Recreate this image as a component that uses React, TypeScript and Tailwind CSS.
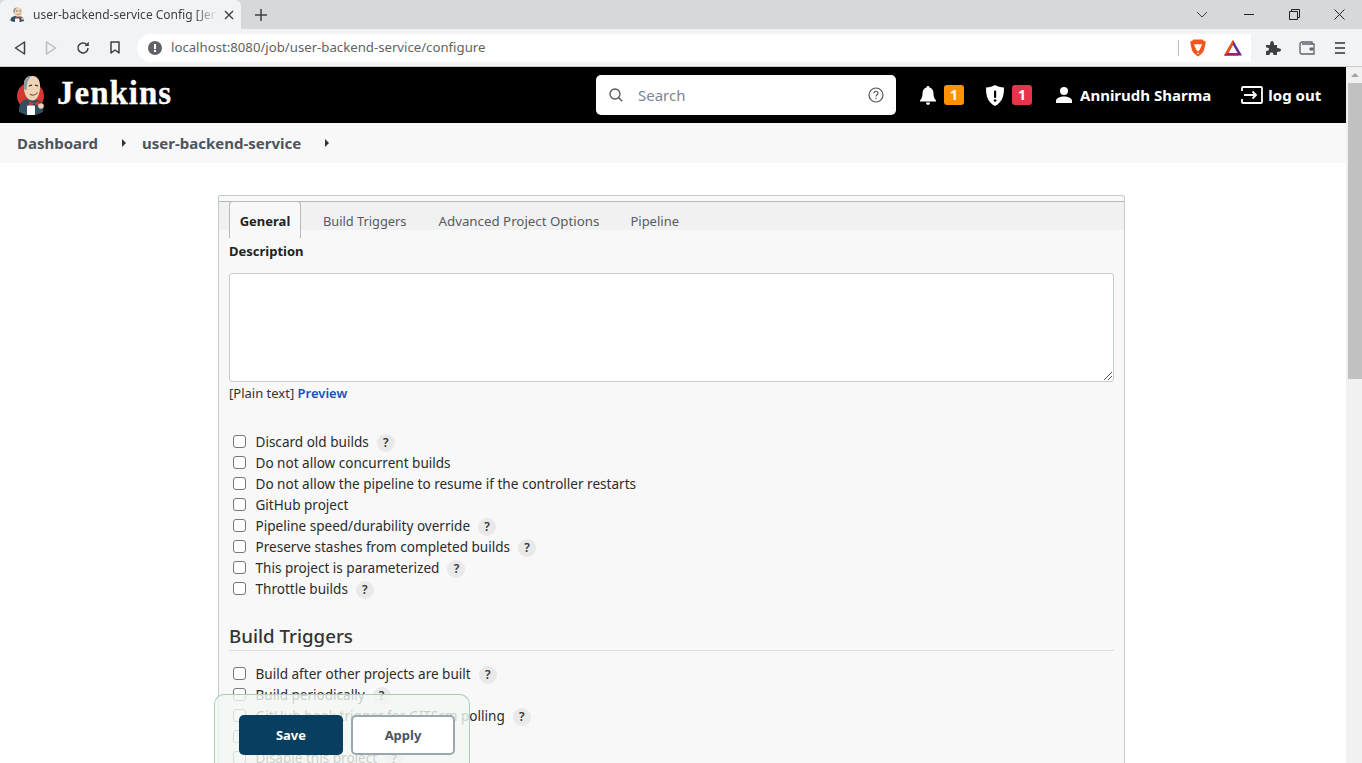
import React from "react";

const generalOptions = [
  { label: "Discard old builds", help: true },
  { label: "Do not allow concurrent builds" },
  { label: "Do not allow the pipeline to resume if the controller restarts" },
  { label: "GitHub project" },
  { label: "Pipeline speed/durability override", help: true },
  { label: "Preserve stashes from completed builds", help: true },
  { label: "This project is parameterized", help: true },
  { label: "Throttle builds", help: true },
];

const triggerOptions = [
  { label: "Build after other projects are built", help: true },
  { label: "Build periodically", help: true },
  { label: "GitHub hook trigger for GITScm polling", help: true },
  { label: "Poll SCM", help: true },
  { label: "Disable this project", help: true },
];

function JenkinsFigure() {
  return (
    <>
      <path d="M3 37 C2 30 6 25 11 24 L21 25 C26 26 28 30 27 37 L20 40 H10 Z" fill="#335061" />
      <path d="M8 9 C8 3 12 0.5 17 1 C22 1.5 24.5 6 24 13 C23.5 20 21 25 17 25.5 C13 26 9 22 8 15 Z" fill="#eed3b5" />
      <path d="M8 10 C8 4 11 1 16 1 C13 2.5 11.5 6 11 10 L10.5 15 L8.2 14.5 Z" fill="#8c9aa3" />
      <path d="M13 11 l3 -1 M19 10 l3 1" stroke="#231f20" strokeWidth="1.2" fill="none" />
      <path d="M14 19 C16 21 20 20 21.5 17.5" stroke="#8a5a44" strokeWidth="1.1" fill="none" />
      <path d="M13 26 L18 28.5 L23 26 L23 31 L18 29 L13 31 Z" fill="#d33833" />
      <rect x="11" y="30.5" width="8" height="9.5" rx="1" fill="#ffffff" />
      <circle cx="25" cy="31" r="2.8" fill="#eed3b5" />
    </>
  );
}

function JenkinsLogo() {
  return (
    <svg width="30" height="40" viewBox="0 0 30 40">
      <circle cx="14.5" cy="21" r="13.5" fill="#d33833" />
      <JenkinsFigure />
    </svg>
  );
}

function Favicon() {
  return (
    <svg width="15" height="15" viewBox="2 0 27 40" preserveAspectRatio="none">
      <JenkinsFigure />
    </svg>
  );
}

function BraveIcon() {
  return (
    <svg width="16" height="18" viewBox="0 0 16 18">
      <path d="M3.5 0.5 H12.5 L14 2 L15.5 2 L15.5 5 L14 11 C13.5 13.5 10 16 8 17.5 C6 16 2.5 13.5 2 11 L0.5 5 L0.5 2 L2 2 Z" fill="#f1561f" />
      <path d="M4 5 L6.5 5.5 L8 5 L9.5 5.5 L12 5 L11 8 L9.5 11 L8 12.5 L6.5 11 L5 8 Z" fill="#ffffff" />
      <path d="M6.5 14 H9.5 L8 15.2 Z" fill="#ffffff" />
    </svg>
  );
}

function BatIcon() {
  return (
    <svg width="18" height="16" viewBox="0 0 18 16">
      <path d="M9 0 L18 15.5 H0 Z" fill="#662d91" />
      <path d="M9 0 L0 15.5 L4 13.2 L9 4.5 Z" fill="#ff5000" />
      <path d="M9 5 L4.5 13 H13.5 Z" fill="#ffffff" />
      <path d="M0 15.5 L4 13 H13 L14.5 15.5 Z" fill="#9e1f63" />
    </svg>
  );
}

function BrowserChrome() {
  return (
    <div className="shrink-0">
      <div className="flex h-[29px] items-end bg-[#d6d9dc]">
        <div className="flex h-[29px] w-[241px] items-center rounded-t-[6px] bg-[#f2f3f5] pl-[10px]">
          <Favicon />
          <span className="ml-2 w-[184px] overflow-hidden whitespace-nowrap text-xs text-[#3c4043] [mask-image:linear-gradient(to_right,black_88%,transparent)]">
            user-backend-service Config [Jenkins]
          </span>
          <svg width="10" height="10" viewBox="0 0 10 10" className="ml-[7px]">
            <path d="M1 1 L9 9 M9 1 L1 9" stroke="#3c4043" strokeWidth="1.4" />
          </svg>
        </div>
        <svg width="14" height="14" viewBox="0 0 14 14" className="mb-[7px] ml-[13px]">
          <path d="M7 1 V13 M1 7 H13" stroke="#3c4043" strokeWidth="1.5" />
        </svg>
        <div className="ml-auto flex h-[29px] items-center">
          <svg width="12" height="7" viewBox="0 0 12 7" className="mr-[36px]">
            <path d="M1 1 L6 6 L11 1" stroke="#3c4043" fill="none" />
          </svg>
          <div className="mr-[35px] h-px w-[10px] bg-[#222]" />
          <svg width="11" height="11" viewBox="0 0 11 11" className="mr-[34px]">
            <path d="M0.5 2.5 H8.5 V10.5 H0.5 Z M2.5 2.5 V0.5 H10.5 V8.5 H8.5" stroke="#222" fill="none" />
          </svg>
          <svg width="11" height="11" viewBox="0 0 11 11" className="mr-[17px]">
            <path d="M0.5 0.5 L10.5 10.5 M10.5 0.5 L0.5 10.5" stroke="#222" />
          </svg>
        </div>
      </div>
      <div className="flex h-[38px] items-center border-b border-[#c8cacc] bg-[#f2f3f5]">
        <svg width="12" height="14" viewBox="0 0 12 14" className="ml-[14px]">
          <path d="M10.5 1 V13 L1.5 7 Z" stroke="#3c4043" strokeWidth="1.5" fill="none" strokeLinejoin="round" />
        </svg>
        <svg width="12" height="14" viewBox="0 0 12 14" className="ml-[19px]">
          <path d="M1.5 1 V13 L10.5 7 Z" stroke="#b9bcc0" strokeWidth="1.5" fill="none" strokeLinejoin="round" />
        </svg>
        <svg width="14" height="14" viewBox="0 0 14 14" className="ml-[19px]">
          <path d="M12 7 A5 5 0 1 1 10.5 3.4" stroke="#3c4043" strokeWidth="1.5" fill="none" />
          <path d="M12.8 0.8 V5 H8.6 Z" fill="#3c4043" />
        </svg>
        <svg width="10" height="13" viewBox="0 0 10 13" className="ml-[20px]">
          <path d="M1 1 H9 V12 L5 9 L1 12 Z" stroke="#3c4043" strokeWidth="1.5" fill="none" strokeLinejoin="round" />
        </svg>
        <div className="ml-[17px] flex h-7 w-[1114px] items-center rounded-l-full rounded-r-[6px] bg-white pl-[11px]">
          <svg width="14" height="14" viewBox="0 0 14 14">
            <circle cx="7" cy="7" r="7" fill="#5f6368" />
            <rect x="6" y="3" width="2" height="5" fill="#fff" />
            <rect x="6" y="9" width="2" height="2" fill="#fff" />
          </svg>
          <span className="ml-[9px] pt-px text-[13.2px] text-[#5f6368]">
            localhost:8080/job/user-backend-service/configure
          </span>
          <div className="ml-auto h-4 w-px bg-[#b9bcc0]" />
          <div className="ml-[11px] flex w-[16px] justify-center">
            <BraveIcon />
          </div>
          <div className="ml-[18px] mr-[9px] flex">
            <BatIcon />
          </div>
        </div>
        <svg width="16" height="16" viewBox="0 0 16 16" className="ml-[14px]">
          <path d="M1 5 H5 C5 2 6 1 7 1 C8 1 9 2 9 5 H12 V8 C15 8 16 9 16 10 C16 11 15 12 12 12 V15 H8.5 C8.5 13 7.5 12.5 6.5 12.5 C5.5 12.5 4.5 13 4.5 15 H1 V11 C3 11 4 10 4 9 C4 8 3 7.5 1 7.5 Z" fill="#3c4043" />
        </svg>
        <svg width="16" height="14" viewBox="0 0 16 14" className="ml-[18px]">
          <path d="M13 3 V1 H3 C2 1 1 2 1 3 V11 C1 12 2 13 3 13 H15 V3 H3" stroke="#5f6368" strokeWidth="1.3" fill="none" />
          <rect x="10.5" y="6.5" width="4" height="3" rx="1" fill="#5f6368" />
        </svg>
        <div className="ml-[20px] flex w-[10px] flex-col gap-[3px]">
          <div className="h-[2px] bg-[#5f6368]" />
          <div className="h-[2px] bg-[#5f6368]" />
          <div className="h-[2px] bg-[#5f6368]" />
        </div>
      </div>
    </div>
  );
}

function JenkinsHeader() {
  return (
    <header className="flex h-14 shrink-0 items-center bg-black text-white">
      <div className="ml-4 flex">
        <JenkinsLogo />
      </div>
      <span className="mb-[4px] ml-[11px] w-[116px] whitespace-nowrap font-['Liberation_Serif',serif] text-[33px] font-bold leading-none tracking-[1px] [-webkit-text-stroke:0.3px_white]">
        Jenkins
      </span>
      <div className="ml-[423px] flex h-10 w-[300px] items-center rounded-[5px] bg-white pl-[13px] pr-[12px]">
        <svg width="14" height="14" viewBox="0 0 14 14">
          <circle cx="6" cy="6" r="5" stroke="#555" strokeWidth="1.3" fill="none" />
          <path d="M9.7 9.7 L13.3 13.3" stroke="#555" strokeWidth="1.3" />
        </svg>
        <span className="ml-[15px] text-[15px] text-[#7a8594]">Search</span>
        <svg width="16" height="16" viewBox="0 0 16 16" className="ml-auto">
          <circle cx="8" cy="8" r="7" stroke="#555" strokeWidth="1.2" fill="none" />
          <path d="M6 6.2 C6 3.6 10 3.6 10 6.2 C10 7.8 8 7.6 8 9.5" stroke="#555" strokeWidth="1.2" fill="none" />
          <rect x="7.4" y="10.8" width="1.2" height="1.4" fill="#555" />
        </svg>
      </div>
      <svg width="16" height="19" viewBox="0 0 16 19" className="ml-6">
        <path d="M8 0 C9 0 9.5 0.7 9.5 1.6 C12 2.3 13.5 4.5 13.5 7.5 C13.5 11 14.2 12.5 16 14.5 V15.5 H0 V14.5 C1.8 12.5 2.5 11 2.5 7.5 C2.5 4.5 4 2.3 6.5 1.6 C6.5 0.7 7 0 8 0 Z" fill="#fff" />
        <path d="M6 16.5 H10 C10 18 9 19 8 19 C7 19 6 18 6 16.5 Z" fill="#fff" />
      </svg>
      <span className="ml-2 flex h-5 w-5 items-center justify-center rounded-[3px] bg-[#fe9200] text-sm font-bold">
        1
      </span>
      <svg width="18" height="21" viewBox="0 0 18 21" className="ml-[22px]">
        <path d="M9 0 C11.5 1.5 14.5 2.5 18 2.5 C18 11 16.5 17 9 21 C1.5 17 0 11 0 2.5 C3.5 2.5 6.5 1.5 9 0 Z" fill="#fff" />
        <rect x="8" y="5.5" width="2.2" height="7.5" rx="1" fill="#000" />
        <circle cx="9.1" cy="15.5" r="1.3" fill="#000" />
      </svg>
      <span className="ml-2 flex h-5 w-5 items-center justify-center rounded-[3px] bg-[#e6354a] text-sm font-bold">
        1
      </span>
      <svg width="16" height="16" viewBox="0 0 16 16" className="ml-6">
        <circle cx="8" cy="4" r="4" fill="#fff" />
        <path d="M0 16 V14 C0 11 4 9.5 8 9.5 C12 9.5 16 11 16 14 V16 Z" fill="#fff" />
      </svg>
      <span className="ml-2 whitespace-nowrap text-[15px] font-bold">Annirudh Sharma</span>
      <svg width="22" height="18" viewBox="0 0 22 18" className="ml-[30px]">
        <path d="M1 5 V2 C1 1.4 1.4 1 2 1 H20 C20.6 1 21 1.4 21 2 V16 C21 16.6 20.6 17 20 17 H2 C1.4 17 1 16.6 1 16 V13" stroke="#fff" strokeWidth="1.8" fill="none" />
        <path d="M3 9 H15 M11.5 5.5 L15 9 L11.5 12.5" stroke="#fff" strokeWidth="1.8" fill="none" />
      </svg>
      <span className="ml-[5px] whitespace-nowrap text-[15px] font-bold">log out</span>
    </header>
  );
}

function Breadcrumbs() {
  return (
    <nav className="flex h-10 shrink-0 items-center bg-[#f8f8f8] pl-[17px] text-[15px] font-bold text-[#4d545d]">
      <span>Dashboard</span>
      <span className="ml-6 h-0 w-0 border-y-[4px] border-l-[4px] border-y-transparent border-l-[#333]" />
      <span className="ml-4">user-backend-service</span>
      <span className="ml-6 h-0 w-0 border-y-[4px] border-l-[4px] border-y-transparent border-l-[#333]" />
    </nav>
  );
}

function OptionRow({ label, help }: { label: string; help?: boolean }) {
  return (
    <div className="flex h-[21px] items-center">
      <span className="mb-[3px] ml-1 h-[13px] w-[13px] rounded-[3px] border border-[#767676] bg-white" />
      <span className="ml-[9.5px] whitespace-nowrap text-[13.55px] text-[#2b2b2b]">{label}</span>
      {help && (
        <span className="ml-2 flex h-[18px] w-[18px] items-center justify-center rounded-full bg-[#e9e9e9] text-xs font-semibold text-[#333]">
          ?
        </span>
      )}
    </div>
  );
}

function ConfigForm() {
  return (
    <div className="ml-[218px] mt-8 w-[907px] rounded-t-[3px] border border-b-0 border-[#c3ccd1] bg-[#f8f8f8]">
      <div className="mt-[5px] flex h-[29px] border-t border-[#b4b9bd] bg-[#f1f1f1] pl-[10px] text-[13px]">
        <div className="z-10 -mt-px flex h-[37px] w-[72px] items-center justify-center rounded-t-[4px] border border-b-0 border-[#b4bcc2] bg-[#f8f8f8] pt-1 font-bold text-[#222]">
          General
        </div>
        <div className="ml-[22px] pt-[10px] text-[12.8px] text-[#555b63]">Build Triggers</div>
        <div className="ml-8 pt-[10px] text-[13.3px] text-[#555b63]">Advanced Project Options</div>
        <div className="ml-[31px] pt-[10px] text-[#555b63]">Pipeline</div>
      </div>
      <div className="px-[10px]">
        <div className="mt-[11px] text-[13px] font-bold leading-[20px] text-[#222]">Description</div>
        <div className="relative mt-[12px] h-[109px] rounded-[3px] border border-[#c3ccd1] bg-white">
          <svg width="8" height="8" viewBox="0 0 8 8" className="absolute bottom-[1px] right-[1px]">
            <path d="M0 8 L8 0 M4 8 L8 4" stroke="#555" />
          </svg>
        </div>
        <div className="mt-px text-[13px] leading-[20px] text-[#333]">
          [Plain text] <span className="font-semibold text-[#204fb8]">Preview</span>
        </div>
        <div className="mt-[29px]">
          {generalOptions.map((o) => (
            <OptionRow key={o.label} {...o} />
          ))}
        </div>
        <h2 className="mt-[22px] border-b border-[#dfdfdf] pb-px text-[18.7px] font-medium leading-[27px] text-[#333]">
          Build Triggers
        </h2>
        <div className="mt-[13px]">
          {triggerOptions.map((o) => (
            <OptionRow key={o.label} {...o} />
          ))}
        </div>
      </div>
    </div>
  );
}

function BottomBar() {
  return (
    <div className="absolute left-[214px] top-[627px] flex h-[80px] w-[256px] items-start gap-2 rounded-t-[10px] border border-b-0 border-[#a9cdb5] bg-[#f2f8f2]/80 pl-6 pt-5">
      <button className="h-10 w-[104px] rounded-[5px] bg-[#083e5f] pt-px text-[13px] font-bold text-white">Save</button>
      <button className="h-10 w-[104px] rounded-[5px] border-2 border-[#9ba7af] bg-white pt-px text-[13px] font-bold text-[#4d545d]">
        Apply
      </button>
    </div>
  );
}

export default function App() {
  return (
    <div className="flex h-screen w-full flex-col overflow-hidden bg-white font-['Noto_Sans',sans-serif]">
      <BrowserChrome />
      <div className="flex min-h-0 flex-1">
        <div className="relative min-w-0 flex-1 overflow-hidden">
          <JenkinsHeader />
          <Breadcrumbs />
          <ConfigForm />
          <BottomBar />
        </div>
        <div className="flex w-4 shrink-0 flex-col items-center bg-[#f1f1f1] pl-[2px]">
          <div className="mt-[6px] h-0 w-0 border-x-[4px] border-b-[4px] border-x-transparent border-b-[#a3a3a3]" />
          <div className="mt-[6px] h-[296px] w-full bg-[#c1c1c1]" />
        </div>
      </div>
    </div>
  );
}
